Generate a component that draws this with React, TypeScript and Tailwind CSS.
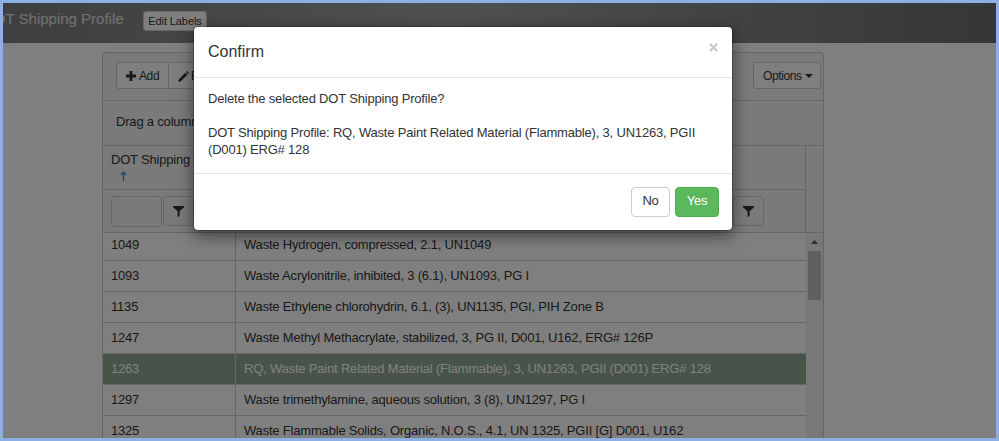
import type { ReactNode } from 'react'

interface Profile {
  id: string
  name: string
  selected?: boolean
}

const profiles: Profile[] = [
  { id: '1049', name: 'Waste Hydrogen, compressed, 2.1, UN1049' },
  { id: '1093', name: 'Waste Acrylonitrile, inhibited, 3 (6.1), UN1093, PG I' },
  { id: '1135', name: 'Waste Ethylene chlorohydrin, 6.1, (3), UN1135, PGI, PIH Zone B' },
  { id: '1247', name: 'Waste Methyl Methacrylate, stabilized, 3, PG II, D001, U162, ERG# 126P' },
  { id: '1263', name: 'RQ, Waste Paint Related Material (Flammable), 3, UN1263, PGII (D001) ERG# 128', selected: true },
  { id: '1297', name: 'Waste trimethylamine, aqueous solution, 3 (8), UN1297, PG I' },
  { id: '1325', name: 'Waste Flammable Solids, Organic, N.O.S., 4.1, UN 1325, PGII [G] D001, U162' },
]

function FilterButton() {
  return (
    <button className="flex h-[30px] w-[31px] shrink-0 items-center justify-center rounded border border-[#ccc] pt-px">
      <svg width="11" height="11" viewBox="0 0 11 11" fill="#333">
        <path d="M0 0h11v1.3L6.6 5.2V10.2l-2 .8V5.2L0 1.3z" />
      </svg>
    </button>
  )
}

function ToolbarButton({ className, children }: { className: string; children: ReactNode }) {
  return (
    <button className={`flex h-[27px] items-center border border-[#ccc] bg-white pt-px text-[12px] tracking-[-0.4px] ${className}`}>
      {children}
    </button>
  )
}

function Grid() {
  return (
    <div className="ml-[99px] mt-[9px] flex h-[400px] w-[722px] flex-col rounded-t border border-[#ccc] bg-[#f5f5f5]">
      <div className="flex h-12 shrink-0 items-start justify-between border-b border-[#ccc] pl-[13px] pr-[2px] pt-[9px]">
        <div className="flex">
          <ToolbarButton className="w-[53px] gap-[3px] rounded-l-[3px] pl-[9px]">
            <svg width="10" height="10" viewBox="0 0 10 10" fill="#333">
              <path d="M3.6 0h2.8v3.6H10v2.8H6.4V10H3.6V6.4H0V3.6h3.6z" />
            </svg>
            Add
          </ToolbarButton>
          <ToolbarButton className="-ml-px w-[54px] gap-[2px] rounded-r-[3px] pl-[9px]">
            <svg width="11" height="11" viewBox="0 0 12 12" fill="#333">
              <path d="M0 12l1.2-3.4L8 1.8l2.2 2.2L3.4 10.8zM8.7 1.1L9.4.4q.5-.4 1 0l1.2 1.2q.4.5 0 1l-.7.7z" />
            </svg>
            Edit
          </ToolbarButton>
        </div>
        <ToolbarButton className="w-[68px] gap-[3px] rounded-[3px] pl-[9px]">
          Options
          <span className="border-x-4 border-t-4 border-x-transparent border-t-[#333]" />
        </ToolbarButton>
      </div>
      <div className="flex h-[45px] shrink-0 items-center border-b border-[#ccc] pb-[2px] pl-[13px]">
        Drag a column header and drop it here to group by that column
      </div>
      <div className="flex h-[87px] shrink-0 border-b border-[#ccc] pr-[17px]">
        <div className="w-[133px] shrink-0 border-r border-[#ccc]">
          <div className="h-11 border-b border-[#ccc] pl-2 pt-[5px] leading-[17px]">
            <div className="whitespace-nowrap">DOT Shipping</div>
            <svg className="ml-[9px] mt-[3px]" width="7" height="10" viewBox="0 0 7 10" fill="none" stroke="#3f8bc8" strokeWidth="1.3">
              <path d="M3.5 10V1.2M1 3.7L3.5 1.2 6 3.7" />
            </svg>
          </div>
          <div className="flex gap-[1px] pl-2 pt-[6px]">
            <div className="h-[31px] w-[51px] rounded border border-[#ccc]" />
            <FilterButton />
          </div>
        </div>
        <div className="flex-1 border-r border-[#ccc]">
          <div className="h-11 border-b border-[#ccc]" />
          <div className="flex justify-end pr-[41px] pt-[6px]">
            <FilterButton />
          </div>
        </div>
      </div>
      <div className="flex min-h-0 flex-1 bg-white">
        <div className="flex flex-1 flex-col justify-start overflow-hidden">
          <div className="-mt-[3px]">
            {profiles.map((profile) => (
              <div
                key={profile.id}
                className={`flex h-[31px] items-center border-b border-[#ccc] ${profile.selected ? 'bg-[#90a992] text-white' : ''}`}
              >
                <div className="flex h-full w-[133px] shrink-0 items-center border-r border-[#ccc] pl-2">{profile.id}</div>
                <div className="whitespace-nowrap pl-2">{profile.name}</div>
              </div>
            ))}
          </div>
        </div>
        <div className="flex w-[17px] flex-col items-center bg-[#f1f1f1] pt-[7px]">
          <svg width="7" height="4" viewBox="0 0 7 4" fill="#505050">
            <path d="M3.5 0L7 4H0z" />
          </svg>
          <div className="mt-[7px] h-[49px] w-[13px] shrink-0 bg-[#c1c1c1]" />
        </div>
      </div>
    </div>
  )
}

function ConfirmDialog() {
  return (
    <div className="flex h-[205px] w-[540px] flex-col rounded-[5px] border border-black/20 bg-white bg-clip-padding shadow-[0_5px_15px_rgba(0,0,0,0.5)]">
      <div className="flex h-[51px] items-start justify-between border-b border-[#e5e5e5] px-[14px] pt-[13px]">
        <h4 className="text-base leading-6 tracking-normal">Confirm</h4>
        <button className="pt-[3px]" aria-label="Close">
          <svg width="9" height="9" viewBox="0 0 9 9" stroke="#c8c8c8" strokeWidth="2">
            <path d="M.8.8l7.4 7.4M8.2.8L.8 8.2" />
          </svg>
        </button>
      </div>
      <div className="h-24 border-b border-[#e5e5e5] px-[14px] pt-[12px] leading-[17px]">
        <p>Delete the selected DOT Shipping Profile?</p>
        <p className="mt-[17px]">
          DOT Shipping Profile: RQ, Waste Paint Related Material (Flammable), 3, UN1263, PGII
          <br />
          (D001) ERG# 128
        </p>
      </div>
      <div className="flex justify-end gap-[5px] pr-[13px] pt-[13px]">
        <button className="h-[30px] w-[39px] rounded border border-[#ccc] pb-[3px]">No</button>
        <button className="h-[30px] w-11 rounded border border-[#4cae4c] bg-[#5cb85c] pb-[3px] text-white">Yes</button>
      </div>
    </div>
  )
}

export default function App() {
  return (
    <div className="relative h-[441px] w-[999px] overflow-hidden border-[3px] border-[#8cb0e3] bg-white font-['Liberation_Sans',Arial,sans-serif] text-[13px] tracking-[-0.19px] text-[#333]">
      <header className="flex h-10 items-start bg-linear-to-r from-[#7c7d80] via-[#a0a1a4] via-45% to-[#6c6d70] text-white">
        <div className="-ml-5 w-40 whitespace-nowrap pt-[5px] text-[15px] leading-[22px] tracking-normal text-[#e4e4e4]">
          DOT Shipping Profile
        </div>
        <button className="mt-2 h-5 w-16 rounded-[3px] border border-[#ccc] bg-white text-[11px] tracking-[-0.1px] text-[#333]">
          Edit Labels
        </button>
      </header>
      <Grid />
      <div className="absolute inset-0 bg-black/50 pl-[190px] pt-[23px]">
        <ConfirmDialog />
      </div>
    </div>
  )
}
